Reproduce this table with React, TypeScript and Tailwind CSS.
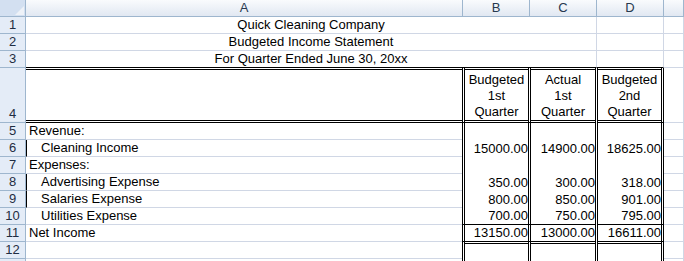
import React from 'react';

const head = 'border-r border-b border-[#9eb6ce]';
const grid = 'border-r border-b border-[#d0d7e5]';
// double rule drawn inside the cell, top and/or bottom
const dblTopBottom =
  'border-b border-b-black shadow-[inset_0_1px_0_#fff,inset_0_-1px_0_#fff,inset_0_2px_0_#000,inset_0_-2px_0_#000]';
const dblTop = 'shadow-[inset_0_1px_0_#fff,inset_0_2px_0_#000]';

type Line = {
  n: number;
  label: string;
  indent?: boolean;
  edge?: boolean;
  v?: string[];
  rule?: boolean;
  top?: boolean;
};

const lines: Line[] = [
  { n: 5, label: 'Revenue:' },
  { n: 6, label: 'Cleaning Income', indent: true, edge: true, v: ['15000.00', '14900.00', '18625.00'] },
  { n: 7, label: 'Expenses:' },
  { n: 8, label: 'Advertising Expense', indent: true, edge: true, v: ['350.00', '300.00', '318.00'] },
  { n: 9, label: 'Salaries Expense', indent: true, edge: true, v: ['800.00', '850.00', '901.00'] },
  { n: 10, label: 'Utilities Expense', indent: true, v: ['700.00', '750.00', '795.00'], rule: true },
  { n: 11, label: 'Net Income', v: ['13150.00', '13000.00', '16611.00'], rule: true },
  { n: 12, label: '', top: true },
  { n: 13, label: '' },
];

function RowHead({ n }: { n?: number }) {
  return (
    <div className={`w-[26px] shrink-0 flex items-end justify-center bg-[#e4ecf7] text-[#1f2d42] ${head}`}>
      {n}
    </div>
  );
}

function ColHead({ w, label }: { w: string; label?: string }) {
  return (
    <div
      className={`${w} flex items-center justify-center bg-linear-to-b from-[#f9fbfd] to-[#e1e8f2] text-[#27394f] ${head}`}
    >
      {label}
    </div>
  );
}

function Money({ w, value, className = '' }: { w: string; value?: string; className?: string }) {
  return (
    <div className={`${w} shrink-0 flex items-end justify-end border-l-[3px] border-double border-l-black ${className}`}>
      {value}
    </div>
  );
}

export default function App() {
  return (
    <div className="w-[684px] h-[261px] overflow-hidden bg-white text-[13px] leading-4 text-black font-['Liberation_Sans',Arial,sans-serif]">
      {/* column letters */}
      <div className="flex h-[17px]">
        <div className={`w-[26px] shrink-0 flex items-end justify-end p-px bg-[#d3e0f1] ${head}`}>
          <svg width="9" height="9" viewBox="0 0 9 9">
            <path d="M9 0 L9 9 L0 9 Z" fill="#eef2f8" />
          </svg>
        </div>
        <ColHead w="w-[437px] shrink-0" label="A" />
        <ColHead w="w-[67px] shrink-0" label="B" />
        <ColHead w="w-[67px] shrink-0" label="C" />
        <ColHead w="w-[67px] shrink-0" label="D" />
        <ColHead w="flex-1" />
      </div>

      {/* title rows, merged A:C */}
      {['Quick Cleaning Company', 'Budgeted Income Statement', 'For Quarter Ended June 30, 20xx'].map((t, i) => (
        <div key={t} className="flex h-[17px]">
          <RowHead n={i + 1} />
          <div className={`w-[571px] shrink-0 flex items-end justify-center ${grid} ${i === 2 ? 'border-b-black' : ''}`}>
            {t}
          </div>
          <div className={`w-[67px] shrink-0 ${grid} ${i === 2 ? 'border-b-black' : ''}`} />
          <div className={`flex-1 ${grid}`} />
        </div>
      ))}

      {/* column titles */}
      <div className="flex h-[55px]">
        <RowHead n={4} />
        <div className={`w-[436px] shrink-0 ${dblTopBottom}`} />
        {[
          ['Budgeted', '1st', 'Quarter', 'w-[66px]'],
          ['Actual', '1st', 'Quarter', 'w-[67px]'],
          ['Budgeted', '2nd', 'Quarter', 'w-[69px] border-r-[3px] border-r-black'],
        ].map(([a, b, c, w], i) => (
          <div
            key={i}
            className={`${w} shrink-0 flex flex-col items-center justify-end pb-[2px] border-l-[3px] border-double border-l-black ${dblTopBottom}`}
          >
            <span>{a}</span>
            <span>{b}</span>
            <span>{c}</span>
          </div>
        ))}
        <div className={`flex-1 ${grid}`} />
      </div>

      {/* body */}
      {lines.map((l) => {
        const cell = `${l.rule ? 'border-b border-b-black' : ''} ${l.top ? dblTop : ''}`;
        return (
          <div key={l.n} className="flex h-[17px]">
            <RowHead n={l.n < 13 ? l.n : undefined} />
            <div
              className={`w-[436px] shrink-0 flex items-end border-b border-[#d0d7e5] ${
                l.edge ? 'border-l border-l-black pl-[14px]' : l.indent ? 'pl-[15px]' : 'pl-[3px]'
              }`}
            >
              {l.label}
            </div>
            <Money w="w-[66px]" value={l.v?.[0]} className={cell} />
            <Money w="w-[67px]" value={l.v?.[1]} className={cell} />
            <Money w="w-[69px]" value={l.v?.[2]} className={`border-r-[3px] border-r-black ${cell}`} />
            <div className={`flex-1 ${grid}`} />
          </div>
        );
      })}
    </div>
  );
}
